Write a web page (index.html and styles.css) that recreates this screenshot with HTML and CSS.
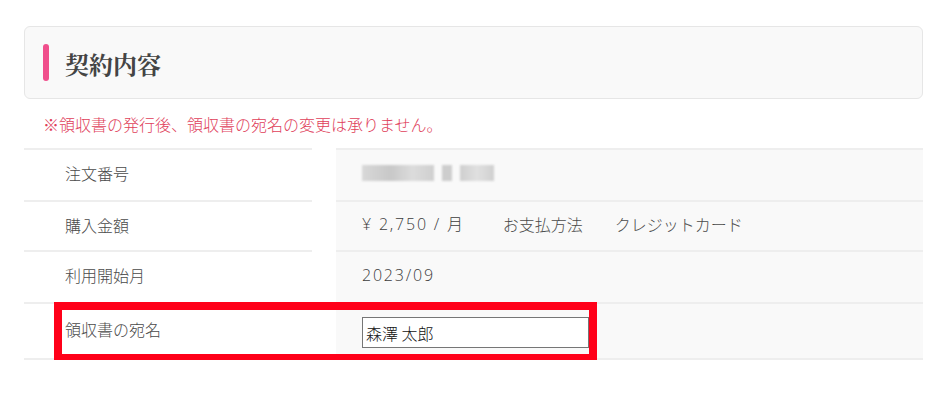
FILE: index.html
```html
<!DOCTYPE html>
<html lang="ja">
<head>
<meta charset="utf-8">
<title>契約内容</title>
<link rel="stylesheet" href="styles.css">
</head>
<body>
<main class="page">
  <header class="section-head">
    <span class="accent"></span>
    <h1 class="title">契約内容</h1>
  </header>
  <p class="notice">※領収書の発行後、領収書の宛名の変更は承りません。</p>
  <div class="table">
    <div class="row">
      <div class="label">注文番号</div>
      <div class="value"><span class="mosaic"><i class="m1"></i><i class="m2"></i><i class="m3"></i></span></div>
    </div>
    <div class="row">
      <div class="label">購入金額</div>
      <div class="value"><span class="num">¥ 2,750 / 月</span><span class="pay">お支払方法</span><span class="method">クレジットカード</span></div>
    </div>
    <div class="row">
      <div class="label">利用開始月</div>
      <div class="value"><span class="num">2023/09</span></div>
    </div>
    <div class="row row-input">
      <div class="label">領収書の宛名</div>
      <div class="value"><input class="name-input" type="text" value="森澤 太郎"></div>
      <span class="highlight"></span>
    </div>
  </div>
</main>
</body>
</html>
```
FILE: styles.css
```css
* { box-sizing: border-box; }
html, body { margin: 0; padding: 0; background: #fff; }
body {
  font-family: "Noto Sans CJK JP", "Noto Sans", sans-serif;
  font-weight: 300;
  color: #4a4a4a;
  font-size: 16px;
}
.page {
  width: 899px;
  margin-left: 24px;
  padding-top: 26px;
}
.section-head {
  display: flex;
  align-items: center;
  height: 73px;
  background: #f9f9f9;
  border: 1px solid #e6e6e6;
  border-radius: 6px;
  padding-left: 18px;
}
.accent {
  width: 6px;
  height: 37px;
  border-radius: 3px;
  background: #f04f8c;
  margin-right: 16px;
}
.title {
  margin: 0;
  font-family: "Noto Serif CJK JP", "Noto Sans CJK JP", serif;
  font-weight: 700;
  font-size: 24px;
  line-height: 1;
  color: #444;
  position: relative;
  top: 1px;
}
.notice {
  margin: 0;
  padding: 13px 0 0 19px;
  height: 49px;
  line-height: 24px;
  font-size: 16px;
  color: #e0405a;
}
.table { display: flex; flex-direction: column; }
.row {
  position: relative;
  display: grid;
  grid-template-columns: 288px 587px;
  column-gap: 24px;
}
.label, .value {
  border-top: 2px solid #eeeeee;
  padding: 10px 0 14px;
  line-height: 26px;
  height: 52px;
}
.label { padding-left: 41px; }
.value {
  background: #f9f9f9;
  padding-left: 26px;
  display: flex;
  align-items: center;
}
.num {
  font-family: "Open Sans", "Noto Sans CJK JP", sans-serif;
  font-weight: 300;
  color: #3c3c3c;
  letter-spacing: 1.8px;
}
.row:nth-child(2) .label, .row:nth-child(2) .value { height: 50px; }
.pay { margin-left: 38px; }
.method { margin-left: 32px; }
.mosaic { display: flex; align-items: center; gap: 8px; filter: blur(1.2px); }
.mosaic i { display: block; height: 16px; background: #d2d2d2; }
.mosaic .m1 { width: 72px; background: linear-gradient(90deg, #d8d8d8, #c8c8c8 40%, #dcdcdc 70%, #cfcfcf); }
.mosaic .m2 { width: 10px; background: #cdcdcd; }
.mosaic .m3 { width: 34px; background: linear-gradient(90deg, #cfcfcf, #e0e0e0 50%, #d0d0d0); }
.row-input .label, .row-input .value {
  height: 58px;
  border-bottom: 2px solid #eeeeee;
}
.row-input .label { padding-top: 12px; }
.row-input .value { align-items: flex-start; padding-top: 13px; }
.name-input {
  width: 227px;
  height: 31px;
  border: 1px solid #767676;
  border-radius: 0;
  background: #fff;
  font-family: "Noto Sans CJK JP", sans-serif;
  font-weight: 300;
  font-size: 16px;
  color: #111;
  padding: 0 3px;
  margin: 0;
}
.highlight {
  position: absolute;
  left: 30px;
  top: 0;
  width: 543px;
  height: 60px;
  border: 8px solid #ff0019;
  pointer-events: none;
}
```
